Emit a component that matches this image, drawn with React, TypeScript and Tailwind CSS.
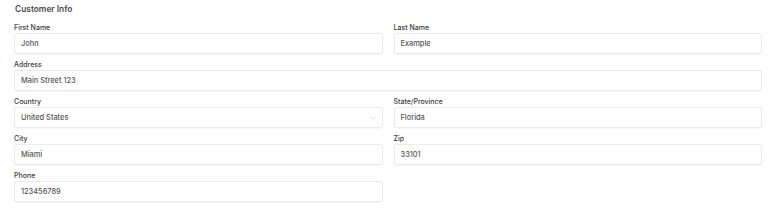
import React from "react";

function Field({ label, value, select }: { label: string; value: string; select?: boolean }) {
  return (
    <div className="flex flex-col">
      <label className="h-[9px] mb-[1px] text-[7px] leading-[9px] font-medium text-[#3a3a3a]">{label}</label>
      <div className="relative h-[21px] rounded-[3px] border border-[#ebebeb] bg-white shadow-[0_0.5px_1px_rgba(0,0,0,0.04)] flex items-center px-[6px]">
        <span className="text-[7.4px] font-medium text-[#555555]">{value}</span>
        {select && (
          <svg className="absolute right-[6px] top-[8px]" width="6" height="4" viewBox="0 0 6 4" fill="none">
            <path d="M0.5 0.8L3 3.2L5.5 0.8" stroke="#c8c8c8" strokeWidth="0.7" />
          </svg>
        )}
      </div>
    </div>
  );
}

export default function App() {
  return (
    <div className="w-[768px] h-[212px] bg-white" style={{ fontFamily: "Inter, 'Noto Sans', sans-serif" }}>
      <div className="pl-[14px] pr-[6px] pt-[4px]">
        <h2 className="h-[10px] text-[8.4px] leading-[10px] font-semibold text-[#4a4a4a] mb-[9px] pl-[1px]">Customer Info</h2>
        <div className="grid grid-cols-2 gap-x-[11px] gap-y-[6px]">
          <Field label="First Name" value="John" />
          <Field label="Last Name" value="Example" />
          <div className="col-span-2">
            <Field label="Address" value="Main Street 123" />
          </div>
          <Field label="Country" value="United States" select />
          <Field label="State/Province" value="Florida" />
          <Field label="City" value="Miami" />
          <Field label="Zip" value="33101" />
          <Field label="Phone" value="123456789" />
        </div>
      </div>
    </div>
  );
}
